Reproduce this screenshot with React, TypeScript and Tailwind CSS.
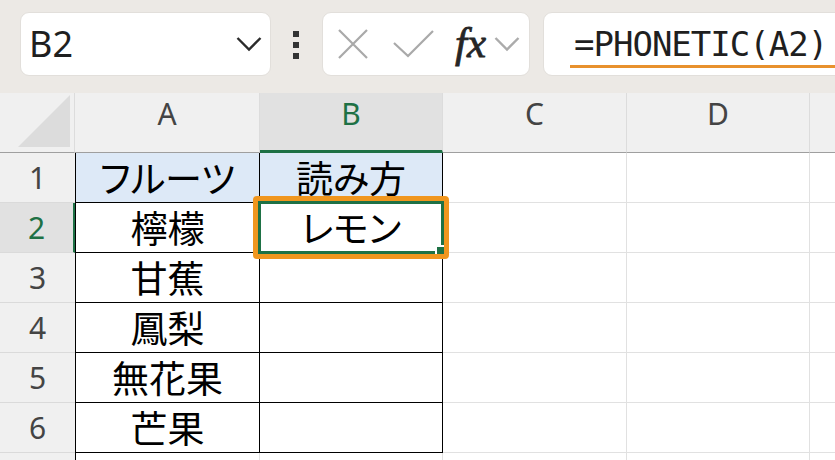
const rows: { n: number; a?: string; b?: string }[] = [
  { n: 1, a: "フルーツ", b: "読み方" },
  { n: 2, a: "檸檬", b: "レモン" },
  { n: 3, a: "甘蕉" },
  { n: 4, a: "鳳梨" },
  { n: 5, a: "無花果" },
  { n: 6, a: "芒果" },
  { n: 7 },
];

const cjk = "[font-family:'Noto_Sans_CJK_JP',sans-serif] [font-feature-settings:'palt']";

const Chevron = ({ className }: { className: string }) => (
  <svg width="26" height="16" viewBox="0 0 26 16" className={className}>
    <polyline points="1.5,2 13,13.5 24.5,2" fill="none" stroke="currentColor" strokeWidth="2.4" />
  </svg>
);

const FormulaBar = () => (
  <div className="h-[93px] bg-[#ece9e5] flex items-start pt-[12px]">
    <div className="ml-[20px] w-[251px] h-[64px] shrink-0 bg-white rounded-[9px] border border-[#e2dfdb] flex items-center justify-between pl-[8px] pr-[8px]">
      <span className="text-[36px] text-[#1f1f1f] [font-family:'Noto_Sans',sans-serif]">B2</span>
      <Chevron className="text-[#2b2b2b]" />
    </div>
    <div className="ml-[22px] mt-[19px] w-[7px] flex flex-col gap-[5px]">
      <div className="w-[6px] h-[6px] bg-[#333]" />
      <div className="w-[6px] h-[6px] bg-[#333]" />
      <div className="w-[6px] h-[6px] bg-[#333]" />
    </div>
    <div className="ml-[23px] w-[208px] h-[64px] shrink-0 bg-white rounded-[9px] border border-[#e2dfdb] flex items-center pl-[14px]">
      <svg width="32" height="32" viewBox="0 0 32 32">
        <path d="M2 2 L30 30 M30 2 L2 30" stroke="#a9a9a9" strokeWidth="2.2" fill="none" />
      </svg>
      <svg width="42" height="30" viewBox="0 0 42 30" className="ml-[24px]">
        <polyline points="1,14 15,27 40,2" stroke="#a9a9a9" strokeWidth="2.2" fill="none" />
      </svg>
      <span className="ml-[20px] text-[43px] leading-none italic text-[#262626] [font-family:'Liberation_Serif',serif] [-webkit-text-stroke:0.8px_#262626] -mt-[4px]">
        fx
      </span>
      <Chevron className="ml-[8px] text-[#ababab]" />
    </div>
    <div className="ml-[13px] w-[400px] h-[64px] shrink-0 bg-white rounded-l-[9px] border border-[#e2dfdb] flex flex-col pt-[11px] pl-[26px]">
      <span className="pl-[4px] text-[34px] leading-[40px] tracking-[-1px] text-[#1f1f1f] [font-family:'DejaVu_Sans_Mono',monospace]">
        =PHONETIC(A2)
      </span>
      <div className="h-[3px] bg-[#e8912d] mt-[1px]" />
    </div>
  </div>
);

export default function App() {
  return (
    <div className="w-[835px] h-[460px] overflow-hidden bg-white">
      <FormulaBar />
      <div className="grid grid-cols-[75px_185px_183px_184px_183px_1fr] grid-rows-[60px_repeat(7,50px)] [font-family:'Noto_Sans',sans-serif]">
        <div className="bg-[#f0f0f0] border-r border-[#dcdcdc] border-b border-b-[#9f9f9f] flex items-end justify-end pr-[3px] pb-[4px]">
          <svg width="54" height="54" viewBox="0 0 54 54">
            <polygon points="53,1 53,53 1,53" fill="#dcdcdc" />
          </svg>
        </div>
        <div className="bg-[#f0f0f0] border-r border-[#dcdcdc] border-b border-b-[#9f9f9f] flex items-center justify-center pb-[18px] text-[30px] text-[#444]">
          A
        </div>
        <div className="bg-[#e1e1e1] border-r border-[#dcdcdc] border-b-[3px] border-b-[#1e7145] flex items-center justify-center pb-[17px] text-[30px] text-[#1e7145]">
          B
        </div>
        <div className="bg-[#f0f0f0] border-r border-[#dcdcdc] border-b border-b-[#9f9f9f] flex items-center justify-center pb-[18px] text-[30px] text-[#444]">
          C
        </div>
        <div className="bg-[#f0f0f0] border-r border-[#dcdcdc] border-b border-b-[#9f9f9f] flex items-center justify-center pb-[18px] text-[30px] text-[#444]">
          D
        </div>
        <div className="bg-[#f0f0f0] border-b border-b-[#9f9f9f]" />

        {rows.map((r) => {
          const inTable = r.n <= 6;
          const head = r.n === 1;
          return [
            <div
              key={`h${r.n}`}
              className={
                r.n === 2
                  ? "bg-[#e1e1e1] border-r-2 border-[#1e7145] border-b border-b-[#dadada] flex items-center justify-center text-[30px] text-[#1e7145]"
                  : "bg-[#f0f0f0] border-b border-[#dadada] flex items-center justify-center text-[30px] text-[#444]"
              }
            >
              {inTable ? r.n : null}
            </div>,
            <div
              key={`a${r.n}`}
              className={
                inTable
                  ? `${head ? "bg-[#dde9f7]" : "bg-white"} border-l border-r border-b border-black flex items-center justify-center text-[37px] text-black ${cjk}`
                  : "border-l border-black border-r border-r-[#e1e1e1]"
              }
            >
              {r.a}
            </div>,
            <div
              key={`b${r.n}`}
              className={
                r.n === 2
                  ? `relative z-10 bg-white border-r border-b border-black flex items-center justify-center text-[37px] text-black ${cjk}`
                  : inTable
                    ? `${head ? "bg-[#dde9f7]" : "bg-white"} border-r border-b border-black flex items-center justify-center text-[37px] text-black ${cjk}`
                    : "border-r border-[#e1e1e1]"
              }
            >
              {r.b}
              {r.n === 2 && (
                <>
                  <div className="absolute -left-[7px] -top-[7px] -right-[7px] -bottom-[7px] border-[5px] border-[#f0961e] rounded-[4px]" />
                  <div className="absolute -left-[2px] -top-[2px] -right-[2px] -bottom-[2px] border-[3px] border-[#1e7145]" />
                  <div className="absolute -right-[2px] -bottom-[2px] w-[9px] h-[9px] bg-[#1e7145] border-l-2 border-t-2 border-white" />
                </>
              )}
            </div>,
            <div key={`c${r.n}`} className="border-r border-b border-[#e1e1e1]" />,
            <div key={`d${r.n}`} className="border-r border-b border-[#e1e1e1]" />,
            <div key={`e${r.n}`} className="border-b border-[#e1e1e1]" />,
          ];
        })}
      </div>
    </div>
  );
}
